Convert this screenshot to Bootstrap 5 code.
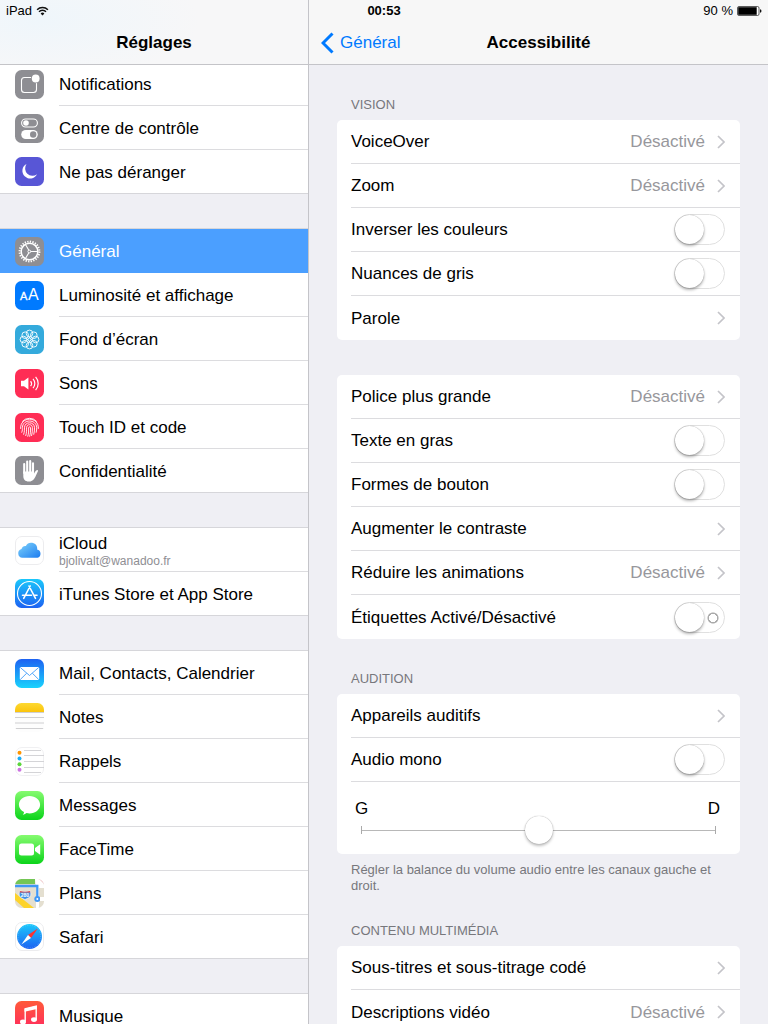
<!DOCTYPE html>
<html lang="fr">
<head>
<meta charset="utf-8">
<meta name="viewport" content="width=device-width, initial-scale=1">
<title>Réglages – Accessibilité</title>
<link href="https://cdn.jsdelivr.net/npm/bootstrap@5.3.0/dist/css/bootstrap.min.css" rel="stylesheet">
<style>
  body { font-family: "Liberation Sans", Arial, sans-serif; font-size: 17px; line-height: 20px; color: #000; background: #efeff4; }
  a { color: inherit; text-decoration: none; }
  svg { flex: none; display: block; }

  .status-bar { font-size: 13px; height: 22px; padding: 0 6px; z-index: 5; }
  .status-bar > * { flex: 1 1 0; }
  .sidebar { flex: 0 0 309px; border-right: 1px solid #c4c4c9; }
  .title-bar { flex: none; height: 65px; padding: 22px 12px 0; background: #f7f7f7; border-bottom: 1px solid #c4c4c8; }
  .sidebar .title-bar { background: radial-gradient(ellipse 160px 60px at 40px 20px, #eff6fb, #f7f7f8); }
  .title-bar h1, .title-bar h2 { font-size: 17px; line-height: 20px; font-weight: 700; margin: 0; }
  .bar-side { flex: 1 1 0; gap: 6px; }
  .back-link { color: #007aff; }
  .pane { flex: 1 1 0; min-height: 0; overflow-y: auto; scrollbar-width: none; }
  .pane::-webkit-scrollbar { display: none; }

  .side-group { background: #fff; border-top: 1px solid #d6d6da; margin-top: 34px; }
  .side-group.scrolled { margin-top: -4px; }
  .side-row { height: 44px; padding-left: 15px; gap: 15px; }
  .side-row .side-text { border-bottom: 1px solid #dcdcdf; padding-top: 2px; }
  .side-row:last-child { border-bottom: 1px solid #d6d6da; }
  .side-row:last-child .side-text, .side-row.active .side-text { border-bottom: 0; }
  .side-row.active { background: #4b9fff; color: #fff; }
  .side-detail { font-size: 12px; line-height: 14px; color: #8e8e93; }

  .settings { padding: 0 28px; }
  .settings .card { border: 0; border-radius: 5px; }
  .settings .card + .card { margin-top: 35px; }
  .group-title { font-size: 13px; line-height: 16px; font-weight: 400; color: #77777c; margin: 0; padding: 32px 14px 7px; }
  .group-note { font-size: 13px; line-height: 16px; color: #77777c; margin: 0; padding: 8px 14px 0; }
  .group-note + .group-title { padding-top: 29px; }
  .set-row { min-height: 44px; margin-left: 14px; padding-right: 15px; gap: 12px; border-bottom: 1px solid #dcdcdf; }
  .set-row:last-child { border-bottom: 0; }
  .set-row span, .set-row label { padding-top: 1px; }
  .set-value { color: #97979c; }

  .toggle { appearance: none; flex: none; position: relative; width: 51px; height: 31px; margin: 0; border: 1px solid #e0e0e0; border-radius: 16px; background: #fff; }
  .toggle::before { content: ""; position: absolute; left: 0; top: 0; width: 29px; height: 29px; border-radius: 50%; background: #fff; box-shadow: 0 2px 3px rgba(0,0,0,.3), 0 0 1px rgba(0,0,0,.4); }
  .toggle:checked { background: #4cd964; }
  .toggle:checked::before { left: 20px; }
  .toggle-labelled { background: radial-gradient(circle at 38px 15px, transparent 4px, #aaa 4px, #aaa 5px, transparent 6px) #fff; }

  .balance { margin-left: 14px; padding: 17px 20px 9px 4px; }
  .balance-slider { display: block; height: 30px; padding: 0; margin: -4px 0 0 6px; width: calc(100% - 10px); appearance: none; background:
    linear-gradient(#aaa, #aaa) left center / 1px 8px no-repeat,
    linear-gradient(#aaa, #aaa) right center / 1px 8px no-repeat,
    linear-gradient(#b8b8b8, #b8b8b8) center / 100% 1px no-repeat; }
  .balance-slider::-webkit-slider-runnable-track { background: transparent; height: 28px; }
  .balance-slider::-webkit-slider-thumb { appearance: none; width: 28px; height: 28px; margin: 0; border: 0; border-radius: 50%; background: #fff; box-shadow: 0 2px 3px rgba(0,0,0,.25), 0 0 1px rgba(0,0,0,.4); }
</style>
</head>
<body>
<svg width="0" height="0" class="position-absolute" aria-hidden="true">
  <defs>
    <symbol id="chevron" viewBox="0 0 8 14"><path d="M1 1l6 6-6 6" fill="none" stroke="#c4c4c9" stroke-width="1.700"/></symbol>
    <linearGradient id="gBlueDown" x2="0" y2="1"><stop stop-color="#1bc8fb"/><stop offset="1" stop-color="#1d62f2"/></linearGradient>
    <linearGradient id="gBlueUp" x2="0" y2="1"><stop stop-color="#1d62f2"/><stop offset="1" stop-color="#19d3fd"/></linearGradient>
    <linearGradient id="gGreen" x2="0" y2="1"><stop stop-color="#86fb70"/><stop offset="1" stop-color="#0bd41a"/></linearGradient>
    <linearGradient id="gRed" x2="0" y2="1"><stop stop-color="#ff5a3a"/><stop offset="1" stop-color="#ff2a5f"/></linearGradient>
    <linearGradient id="gYellow" x2="0" y2="1"><stop stop-color="#fdd932"/><stop offset="1" stop-color="#fbc40c"/></linearGradient>
    <linearGradient id="gCloud" x2="1" y2="1"><stop stop-color="#7fd3fb"/><stop offset="1" stop-color="#1c7cf0"/></linearGradient>
    <clipPath id="tile"><rect width="29" height="29" rx="6.5"/></clipPath>
  </defs>
</svg>

<div class="position-relative d-flex flex-column vh-100 overflow-hidden">
  <div class="status-bar position-absolute top-0 start-0 end-0 d-flex align-items-center">
    <div class="d-flex align-items-center gap-1"><span>iPad</span>
      <svg width="13" height="10" viewBox="0 0 12 10" fill="none" stroke="#111" stroke-width="1.5"><path d="M.6 3.700a7.600 7.600 0 0 1 10.800 0M2.500 5.800a5 5 0 0 1 7 0"/><path d="M6 9.500L4.100 7.500a2.700 2.700 0 0 1 3.800 0z" fill="#111" stroke="none"/></svg>
    </div>
    <strong class="text-center">00:53</strong>
    <div class="d-flex align-items-center justify-content-end gap-1"><span>90 %</span>
      <svg width="25" height="10" viewBox="0 0 25 10"><rect x=".5" y=".5" width="21.500" height="9" rx="1.500" fill="#fff" stroke="#333" stroke-width=".8"/><rect x="1.200" y="1.200" width="18.500" height="7.600" fill="#000"/><path d="M23 3.200q1.500.3 1.500 1.800T23 6.800z" fill="#111"/></svg>
    </div>
  </div>

  <div class="d-flex flex-grow-1 overflow-hidden">
    <aside class="sidebar d-flex flex-column">
      <header class="title-bar d-flex align-items-center justify-content-center"><h1>Réglages</h1></header>
      <nav class="pane" aria-label="Réglages">
        <div class="side-group scrolled">
          <a href="#" class="side-row d-flex align-items-center">
            <svg width="29" height="29"><rect width="29" height="29" rx="6.500" fill="#8e8e93"/><rect x="6.500" y="7.500" width="15" height="15" rx="3" fill="none" stroke="#fff" stroke-width="1.100"/><circle cx="20.700" cy="8.500" r="4.800" fill="#8e8e93"/><circle cx="20.700" cy="8.500" r="3.900" fill="#fff"/></svg>
            <span class="side-text flex-grow-1 h-100 d-flex align-items-center">Notifications</span></a>
          <a href="#" class="side-row d-flex align-items-center">
            <svg width="29" height="29"><rect width="29" height="29" rx="6.500" fill="#8e8e93"/><rect x="6.600" y="5" width="15.800" height="8" rx="4" fill="none" stroke="#fff" stroke-width="1.100"/><circle cx="11" cy="9" r="2.800" fill="#fff"/><rect x="6.200" y="16" width="16.600" height="9" rx="4.500" fill="#fff"/><circle cx="18.200" cy="20.500" r="3.200" fill="#8e8e93"/></svg>
            <span class="side-text flex-grow-1 h-100 d-flex align-items-center">Centre de contrôle</span></a>
          <a href="#" class="side-row d-flex align-items-center">
            <svg width="29" height="29"><rect width="29" height="29" rx="6.500" fill="#5856d6"/><path d="M11.500 7A7.700 7.700 0 1 0 22 17.200 7.400 7.400 0 0 1 11.500 7z" fill="#fff"/></svg>
            <span class="side-text flex-grow-1 h-100 d-flex align-items-center">Ne pas déranger</span></a>
        </div>

        <div class="side-group">
          <a href="#" class="side-row active d-flex align-items-center" aria-current="page">
            <svg width="29" height="29"><rect width="29" height="29" rx="6.500" fill="#8e8e93"/><g fill="none" stroke="#fff"><circle cx="14.500" cy="14.500" r="9.900" stroke-width="2" stroke-dasharray="1.300 1.292"/><circle cx="14.500" cy="14.500" r="8.300" stroke-width="1.500"/><path d="M15.500 14.500h7M14 13.600l-3.500-6.100M14 15.400l-3.500 6.100" stroke-width="1.100"/><circle cx="14.300" cy="14.500" r="1.400" stroke-width=".9"/></g></svg>
            <span class="side-text flex-grow-1 h-100 d-flex align-items-center">Général</span></a>
          <a href="#" class="side-row d-flex align-items-center">
            <svg width="29" height="29" fill="#fff"><rect width="29" height="29" rx="6.500" fill="#007aff"/><text x="5" y="19" font-size="11" stroke="#fff" stroke-width=".3">A</text><text x="13" y="19" font-size="16">A</text></svg>
            <span class="side-text flex-grow-1 h-100 d-flex align-items-center">Luminosité et affichage</span></a>
          <a href="#" class="side-row d-flex align-items-center">
            <svg width="29" height="29"><rect width="29" height="29" rx="6.500" fill="#34aadc"/><g fill="none" stroke="#fff" stroke-width=".9"><circle cx="14.500" cy="8.400" r="3.300"/><circle cx="18.800" cy="10.200" r="3.300"/><circle cx="20.600" cy="14.500" r="3.300"/><circle cx="18.800" cy="18.800" r="3.300"/><circle cx="14.500" cy="20.600" r="3.300"/><circle cx="10.200" cy="18.800" r="3.300"/><circle cx="8.400" cy="14.500" r="3.300"/><circle cx="10.200" cy="10.200" r="3.300"/><circle cx="14.500" cy="14.500" r="1.500"/><path d="M14.500 11.700v1.300M14.500 16v1.300M11.700 14.500H13M16 14.500h1.300M12.500 12.500l1 1M15.500 15.500l1 1M16.500 12.500l-1 1M13.500 15.500l-1 1"/></g></svg>
            <span class="side-text flex-grow-1 h-100 d-flex align-items-center">Fond d’écran</span></a>
          <a href="#" class="side-row d-flex align-items-center">
            <svg width="29" height="29"><rect width="29" height="29" rx="6.500" fill="#ff2d55"/><path d="M6 11.800h3l4.400-3.200v11.800L9 17.200H6z" fill="#fff"/><g fill="none" stroke="#fff" stroke-width="1.200"><path d="M15.600 12a4 4 0 0 1 0 5M18 9.800a7 7 0 0 1 0 9.400M20.600 7.800a10 10 0 0 1 0 13.400"/></g></svg>
            <span class="side-text flex-grow-1 h-100 d-flex align-items-center">Sons</span></a>
          <a href="#" class="side-row d-flex align-items-center">
            <svg width="29" height="29"><rect width="29" height="29" rx="6.500" fill="#ff2d55"/><g fill="none" stroke="#fff" stroke-width=".9" stroke-linecap="round"><path d="M7.500 8.300a9.300 9.300 0 0 1 14 0M5.600 15.500c-.3-6 4-9.300 8.900-9.300s9.200 3.300 8.900 9.300M6.800 19.300c.8-2 .5-3 .6-5 .3-4 3.500-6.300 7.100-6.300s6.900 2.300 7.200 6.300c0 2-.1 3.400-.5 5M8.700 21.300c1-3 .6-4.500.8-7 .3-2.800 2.300-4.500 5-4.500s4.700 1.700 5 4.500c.1 2.500-.1 4.700-.7 7M10.800 22.600c1-3 .6-6 .8-8.200.2-1.800 1.300-2.700 2.900-2.700s2.700.9 2.900 2.700c.2 3-.2 5.700-.8 8.200M12.800 23.300c1-3 .8-5.500.8-8.500 0-1.300 1.800-1.300 1.900 0 .1 3.200 0 5.700-.8 8.500"/></g></svg>
            <span class="side-text flex-grow-1 h-100 d-flex align-items-center">Touch ID et code</span></a>
          <a href="#" class="side-row d-flex align-items-center">
            <svg width="29" height="29"><rect width="29" height="29" rx="6.500" fill="#8e8e93"/><path d="M8.300 15.500h10.400l.4 2c1-1.500 1.700-3.400 3-3.500 1.100 0 1.100.8.700 1.600-1.100 2.200-2 5-3.600 7.100-1.300 1.900-3 2.800-5.500 2.800-3.600 0-5.400-2.200-5.400-5.500z" fill="#fff"/><path d="M9.200 17V8M12.200 16V5.600M15.200 16V5M18 17V7.200" stroke="#fff" stroke-width="2.100" stroke-linecap="round"/></svg>
            <span class="side-text flex-grow-1 h-100 d-flex align-items-center">Confidentialité</span></a>
        </div>

        <div class="side-group">
          <a href="#" class="side-row d-flex align-items-center">
            <svg width="29" height="29"><rect x=".5" y=".5" width="28" height="28" rx="6.500" fill="#fff" stroke="#ececee"/><path d="M7.300 21.700a4.500 4.500 0 0 1-.8-8.800 4.200 4.200 0 0 1 4.400-2.900 6 6 0 0 1 11.300 2.100c0 .5 0 .9-.1 1.300a4.300 4.300 0 0 1 .4 8.300z" fill="url(#gCloud)"/></svg>
            <span class="side-text flex-grow-1 h-100 d-flex flex-column justify-content-center"><span>iCloud</span><span class="side-detail">bjolivalt@wanadoo.fr</span></span></a>
          <a href="#" class="side-row d-flex align-items-center">
            <svg width="29" height="29"><rect width="29" height="29" rx="6.500" fill="url(#gBlueDown)"/><g fill="none" stroke="#fff" stroke-width="1.100"><circle cx="14.500" cy="14.500" r="12"/><path d="M7.500 16.200h9M19 16.200h3M14 7l6.500 12.300M15.200 7L8.700 19.300" stroke-width="1.600" stroke-linecap="round"/></g></svg>
            <span class="side-text flex-grow-1 h-100 d-flex align-items-center">iTunes Store et App Store</span></a>
        </div>

        <div class="side-group">
          <a href="#" class="side-row d-flex align-items-center">
            <svg width="29" height="29"><rect width="29" height="29" rx="6.500" fill="url(#gBlueUp)"/><rect x="4.800" y="8" width="19.400" height="13" rx="1.300" fill="#fff"/><path d="M5.300 8.500l9.200 8 9.200-8M5.300 20.500l6.400-6.300M23.700 20.500l-6.400-6.300" fill="none" stroke="#3f9cf8" stroke-width=".9"/></svg>
            <span class="side-text flex-grow-1 h-100 d-flex align-items-center">Mail, Contacts, Calendrier</span></a>
          <a href="#" class="side-row d-flex align-items-center">
            <svg width="29" height="29"><g clip-path="url(#tile)"><rect width="29" height="29" fill="#fdfdfd"/><rect width="29" height="9" fill="url(#gYellow)"/><path d="M0 9.500h29M0 14.500h29M0 20h29M0 25.500h29" stroke="#c9c9cc" stroke-width=".9"/></g></svg>
            <span class="side-text flex-grow-1 h-100 d-flex align-items-center">Notes</span></a>
          <a href="#" class="side-row d-flex align-items-center">
            <svg width="29" height="29"><rect x=".5" y=".5" width="28" height="28" rx="6.500" fill="#fff" stroke="#f0f0f2"/><path d="M9 3.500h17M9 8.500h20M9 14.500h20M9 20.500h20M9 25.500h17" stroke="#cfcfd2" stroke-width=".9"/><circle cx="4.500" cy="5.800" r="2" fill="#ff9500"/><circle cx="4.500" cy="11.400" r="2" fill="#1badf8"/><circle cx="4.500" cy="17.200" r="2" fill="#5bd63b"/><circle cx="4.500" cy="22.800" r="2" fill="#cc73e1"/></svg>
            <span class="side-text flex-grow-1 h-100 d-flex align-items-center">Rappels</span></a>
          <a href="#" class="side-row d-flex align-items-center">
            <svg width="29" height="29"><rect width="29" height="29" rx="6.500" fill="url(#gGreen)"/><path d="M14.500 5c5.900 0 10.600 3.900 10.600 8.700s-4.700 8.700-10.600 8.700c-1 0-2-.1-2.900-.3-1 .9-2.200 1.500-3.900 1.600.8-.8 1.300-1.700 1.300-2.800-3-1.500-5.100-4.100-5.100-7.200C3.900 8.900 8.600 5 14.500 5z" fill="#fff"/></svg>
            <span class="side-text flex-grow-1 h-100 d-flex align-items-center">Messages</span></a>
          <a href="#" class="side-row d-flex align-items-center">
            <svg width="29" height="29"><rect width="29" height="29" rx="6.500" fill="url(#gGreen)"/><rect x="4" y="8.500" width="15" height="12" rx="2.500" fill="#fff"/><path d="M20 13l5.200-3.800v10.600L20 16z" fill="#fff"/></svg>
            <span class="side-text flex-grow-1 h-100 d-flex align-items-center">FaceTime</span></a>
          <a href="#" class="side-row d-flex align-items-center">
            <svg width="29" height="29"><g clip-path="url(#tile)"><rect width="29" height="29" fill="#e4dfd0"/><path d="M0 0h20v5H0z" fill="#74c655"/><path d="M24 0h5v5z" fill="#f8b8c8"/><path d="M20 0h4l5 5v4h-5v20h-3V9z" fill="#fff"/><path d="M0 14L19 29H9L0 21z" fill="#fdd32b"/><path d="M0 7h22.300v12" fill="none" stroke="#3f97f6" stroke-width="2.300"/><circle cx="22.300" cy="20" r="3" fill="#3f97f6"/><circle cx="22.300" cy="20" r="1" fill="#fff"/><path d="M25 18h4v4h-4z" fill="#fff"/><path d="M4.800 12q5.200 1.500 10.400 0 2 5-1.800 7L10 20.500 6.600 19q-3.800-2-1.800-7z" fill="#3f8fe6" stroke="#fff" stroke-width=".6"/><path d="M5 12q5 1.300 10 0l.4 1.500H4.600z" fill="#e9534f"/><text x="5.800" y="18" font-size="5" font-weight="700" fill="#fff">280</text></g></svg>
            <span class="side-text flex-grow-1 h-100 d-flex align-items-center">Plans</span></a>
          <a href="#" class="side-row d-flex align-items-center">
            <svg width="29" height="29"><rect x=".5" y=".5" width="28" height="28" rx="6.500" fill="#fff" stroke="#ececee"/><circle cx="14.500" cy="14.500" r="12.500" fill="url(#gBlueDown)"/><circle cx="14.500" cy="14.500" r="11.300" fill="none" stroke="#fff" stroke-width="1" stroke-dasharray=".4 1.400" opacity=".4"/><path d="M22.800 6.500L16 16l-3-3z" fill="#ff3131"/><path d="M6.300 22.500L13 13l3 3z" fill="#fff"/></svg>
            <span class="side-text flex-grow-1 h-100 d-flex align-items-center">Safari</span></a>
        </div>

        <div class="side-group">
          <a href="#" class="side-row d-flex align-items-center">
            <svg width="29" height="29"><rect width="29" height="29" rx="6.500" fill="url(#gRed)"/><path d="M10.200 20.500V8.300l11-2.600v12.400" fill="none" stroke="#fff" stroke-width="1.400"/><path d="M9.500 7.200l12.400-2.900v3.600L9.500 10.800z" fill="#fff"/><ellipse cx="8" cy="21" rx="3" ry="2.400" fill="#fff"/><ellipse cx="19" cy="18.600" rx="3" ry="2.400" fill="#fff"/></svg>
            <span class="side-text flex-grow-1 h-100 d-flex align-items-center">Musique</span></a>
        </div>
      </nav>
    </aside>

    <section class="d-flex flex-column flex-grow-1">
      <header class="title-bar d-flex align-items-center">
        <a href="#" class="back-link bar-side d-flex align-items-center">
          <svg width="13" height="22" viewBox="0 0 13 22"><path d="M11.500 1.500L2 11l9.500 9.500" fill="none" stroke="#007aff" stroke-width="3"/></svg>Général</a>
        <h2>Accessibilité</h2>
        <span class="bar-side"></span>
      </header>
      <main class="pane">
        <div class="settings">
          <h3 class="group-title">VISION</h3>
          <div class="card">
            <a href="#" class="set-row d-flex align-items-center"><span class="me-auto">VoiceOver</span><span class="set-value">Désactivé</span><svg width="8" height="14"><use href="#chevron"/></svg></a>
            <a href="#" class="set-row d-flex align-items-center"><span class="me-auto">Zoom</span><span class="set-value">Désactivé</span><svg width="8" height="14"><use href="#chevron"/></svg></a>
            <div class="set-row d-flex align-items-center"><label class="me-auto" for="invert">Inverser les couleurs</label><input class="toggle" type="checkbox" role="switch" id="invert"></div>
            <div class="set-row d-flex align-items-center"><label class="me-auto" for="grays">Nuances de gris</label><input class="toggle" type="checkbox" role="switch" id="grays"></div>
            <a href="#" class="set-row d-flex align-items-center"><span class="me-auto">Parole</span><svg width="8" height="14"><use href="#chevron"/></svg></a>
          </div>

          <div class="card">
            <a href="#" class="set-row d-flex align-items-center"><span class="me-auto">Police plus grande</span><span class="set-value">Désactivé</span><svg width="8" height="14"><use href="#chevron"/></svg></a>
            <div class="set-row d-flex align-items-center"><label class="me-auto" for="bold">Texte en gras</label><input class="toggle" type="checkbox" role="switch" id="bold"></div>
            <div class="set-row d-flex align-items-center"><label class="me-auto" for="shapes">Formes de bouton</label><input class="toggle" type="checkbox" role="switch" id="shapes"></div>
            <a href="#" class="set-row d-flex align-items-center"><span class="me-auto">Augmenter le contraste</span><svg width="8" height="14"><use href="#chevron"/></svg></a>
            <a href="#" class="set-row d-flex align-items-center"><span class="me-auto">Réduire les animations</span><span class="set-value">Désactivé</span><svg width="8" height="14"><use href="#chevron"/></svg></a>
            <div class="set-row d-flex align-items-center"><label class="me-auto" for="labels">Étiquettes Activé/Désactivé</label><input class="toggle toggle-labelled" type="checkbox" role="switch" id="labels"></div>
          </div>

          <h3 class="group-title">AUDITION</h3>
          <div class="card">
            <a href="#" class="set-row d-flex align-items-center"><span class="me-auto">Appareils auditifs</span><svg width="8" height="14"><use href="#chevron"/></svg></a>
            <div class="set-row d-flex align-items-center"><label class="me-auto" for="mono">Audio mono</label><input class="toggle" type="checkbox" role="switch" id="mono"></div>
            <div class="balance">
              <label class="d-flex justify-content-between" for="balance"><span>G</span><span>D</span></label>
              <input type="range" class="form-range balance-slider" id="balance" min="0" max="100" value="50">
            </div>
          </div>
          <p class="group-note">Régler la balance du volume audio entre les canaux gauche et droit.</p>

          <h3 class="group-title">CONTENU MULTIMÉDIA</h3>
          <div class="card">
            <a href="#" class="set-row d-flex align-items-center"><span class="me-auto">Sous-titres et sous-titrage codé</span><svg width="8" height="14"><use href="#chevron"/></svg></a>
            <a href="#" class="set-row d-flex align-items-center"><span class="me-auto">Descriptions vidéo</span><span class="set-value">Désactivé</span><svg width="8" height="14"><use href="#chevron"/></svg></a>
          </div>
        </div>
      </main>
    </section>
  </div>
</div>
<script src="https://cdn.jsdelivr.net/npm/bootstrap@5.3.0/dist/js/bootstrap.bundle.min.js"></script>
</body>
</html>
